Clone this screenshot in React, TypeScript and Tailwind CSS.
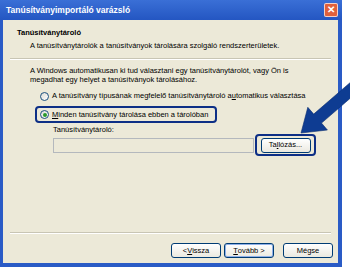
import React from 'react';

function Radio({ checked }: { checked?: boolean }) {
  return (
    <span className="relative flex h-[9px] w-[9px] shrink-0 items-center justify-center rounded-full border border-[#1c5180] bg-gradient-to-br from-[#dcdcd5] to-white">
      {checked && <span className="h-[4px] w-[4px] rounded-full bg-[#2a9a2a]" />}
    </span>
  );
}

function XpButton({ children, isDefault }: { children: React.ReactNode; isDefault?: boolean }) {
  return (
    <button
      className={
        'flex h-[15px] w-[50px] items-center justify-center rounded-[3px] border border-[#003c74] bg-gradient-to-b from-white to-[#ebe9e0] text-[7.5px] text-black ' +
        (isDefault ? 'shadow-[inset_0_0_0_1px_#8fb0e8]' : '')
      }
    >
      {children}
    </button>
  );
}

export default function App() {
  return (
    <div className="relative h-[267px] w-[350px] overflow-hidden bg-white font-['Liberation_Sans',Arial,sans-serif]">
      <div className="flex h-[267px] w-[342px] flex-col border-x-[3px] border-b-[4px] border-[#2a5bc6] border-r-[4px] bg-[#ece9d8]">
        {/* title bar */}
        <div className="-mx-[3px] -mr-[4px] flex h-[20px] items-center justify-between bg-gradient-to-b from-[#3a6fd6] to-[#2456c2] pl-[6px] pr-[4px]">
          <span className="text-[8.5px] font-bold text-white">Tanúsítványimportáló varázsló</span>
          <span className="flex h-[14px] w-[14px] items-center justify-center rounded-[2px] border border-white/70 bg-[#e0603b] text-[10px] font-bold leading-none text-white">
            ✕
          </span>
        </div>

        {/* header */}
        <div className="flex h-[38px] flex-col pl-[14px] pt-[8px]">
          <div className="text-[7.5px] font-bold leading-[10px] text-black">Tanúsítványtároló</div>
          <div className="mt-[3px] pl-[13px] text-[7.5px] leading-[10px] text-black">
            A tanúsítványtárolók a tanúsítványok tárolására szolgáló rendszerterületek.
          </div>
        </div>
        <div className="mx-[7px] h-px bg-[#c8c5b4]" />
        <div className="mx-[7px] h-px bg-white" />

        {/* content */}
        <div className="flex flex-1 flex-col pl-[27px] pt-[7px]">
          <div className="text-[7.5px] leading-[8.5px] text-black">
            A Windows automatikusan ki tud választani egy tanúsítványtárolót, vagy Ön is
            <br />
            megadhat egy helyet a tanúsítványok tárolásához.
          </div>

          <div className="mt-[7px] flex h-[10px] items-center gap-[3px] pl-[10px] text-[7.5px] text-black">
            <Radio />
            <span>
              A tanúsítvány típusának megfelelő tanúsítványtároló a<u>u</u>tomatikus választása
            </span>
          </div>

          <div className="ml-[5px] mt-[5px] flex h-[17px] w-[182px] items-center gap-[3px] rounded-[4px] border-2 border-[#0d2f86] pl-[3px] text-[7.5px] text-black">
            <Radio checked />
            <span>
              <u>M</u>inden tanúsítvány tárolása ebben a tárolóban
            </span>
          </div>

          <div className="ml-[23px] mt-[2px] text-[7.5px] leading-[9px] text-black">Tanúsítványtároló:</div>

          <div className="ml-[23px] flex h-[22px] items-center">
            <div className="h-[15px] w-[201px] border border-[#b4b8bd] bg-[#ece9d8]" />
            <div className="ml-px flex h-[22px] w-[61px] items-center justify-center rounded-[4px] border-2 border-[#0d2f86]">
              <XpButton>
                Ta<u>l</u>lózás...
              </XpButton>
            </div>
          </div>
        </div>

        {/* footer */}
        <div className="mx-[7px] h-px bg-[#c8c5b4]" />
        <div className="mx-[7px] h-px bg-white" />
        <div className="flex h-[29px] items-start justify-end gap-[5px] pr-[5px] pt-[9px]">
          <div className="flex gap-[3px]">
            <XpButton>
              &lt; <u>V</u>issza
            </XpButton>
            <XpButton isDefault>
              <u>T</u>ovább &gt;
            </XpButton>
          </div>
          <div className="ml-[4px]">
            <XpButton>Mégse</XpButton>
          </div>
        </div>
      </div>

      {/* arrow annotation */}
      <svg className="pointer-events-none absolute left-0 top-0" width="350" height="267" viewBox="0 0 350 267">
        <polygon
          points="301,133 307.8,107.3 313.7,114.1 351.5,81.4 359.3,90.4 321.5,123.1 327.4,130"
          fill="#0e3c92"
          stroke="#0a2d70"
          strokeWidth="0.6"
        />
      </svg>
    </div>
  );
}
